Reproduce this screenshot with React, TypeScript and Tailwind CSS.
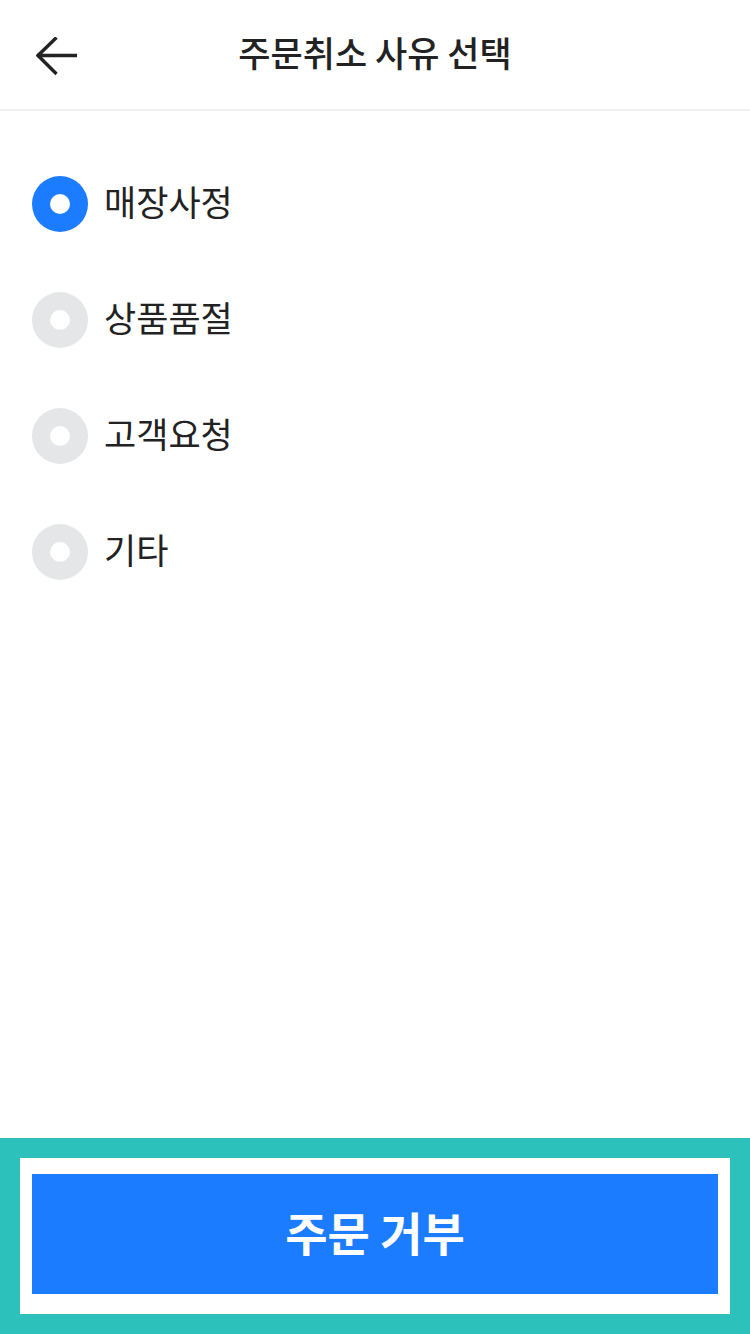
import React, { useState } from 'react';

const reasons = ['매장사정', '상품품절', '고객요청', '기타'];

const font = { fontFamily: '"Noto Sans CJK KR", "Noto Sans", sans-serif' };

const App: React.FC = () => {
  const [selected, setSelected] = useState(0);

  return (
    <div className="flex h-[1334px] w-[750px] flex-col bg-white" style={font}>
      <header className="relative flex h-[111px] items-center justify-center border-b-2 border-[#efefef] pb-[4px]">
        <button className="absolute left-[30px] top-[31px] p-[6px]">
          <svg width="42" height="40" viewBox="0 0 42 40" fill="none" stroke="#222" strokeWidth="3.4" strokeLinecap="butt">
            <path d="M1 18.5 H41" />
            <path d="M20.5 0.5 L2 18.5 L20.5 37" />
          </svg>
        </button>
        <h1 className="text-[35px] font-medium text-[#222]">주문취소 사유 선택</h1>
      </header>

      <ul className="pt-[35px]">
        {reasons.map((r, i) => (
          <li key={r}>
            <button
              className="flex h-[116px] w-full items-center pl-[32px]"
              onClick={() => setSelected(i)}
            >
              <span
                className={
                  'flex h-[56px] w-[56px] items-center justify-center rounded-full ' +
                  (selected === i ? 'bg-[#1b7cff]' : 'bg-[#e5e6e8]')
                }
              >
                <span className="h-[20px] w-[20px] rounded-full bg-white" />
              </span>
              <span className="ml-[16px] -mt-[5px] text-[35px] text-[#222]">{r}</span>
            </button>
          </li>
        ))}
      </ul>

      <footer className="mt-auto h-[196px] bg-[#2cc1bb] p-[20px]">
        <div className="h-[156px] bg-white px-[12px] pb-[20px] pt-[16px]">
          <button className="flex h-[120px] w-full items-center justify-center bg-[#1b7cff] pb-[6px] text-[46px] font-bold text-white">
            주문 거부
          </button>
        </div>
      </footer>
    </div>
  );
};

export default App;
